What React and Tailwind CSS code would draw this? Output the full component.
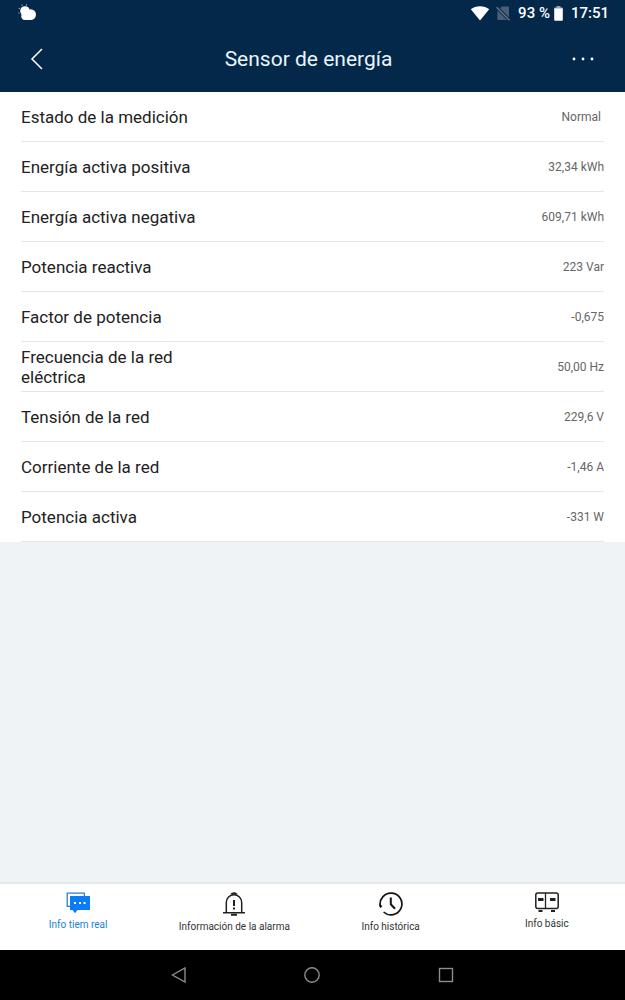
import React from 'react';

const readings = [
  { label: 'Estado de la medición', value: 'Normal', inset: true },
  { label: 'Energía activa positiva', value: '32,34 kWh' },
  { label: 'Energía activa negativa', value: '609,71 kWh' },
  { label: 'Potencia reactiva', value: '223 Var' },
  { label: 'Factor de potencia', value: '-0,675' },
  { label: 'Frecuencia de la red eléctrica', value: '50,00 Hz' },
  { label: 'Tensión de la red', value: '229,6 V' },
  { label: 'Corriente de la red', value: '-1,46 A' },
  { label: 'Potencia activa', value: '-331 W' },
];

function WeatherIcon() {
  return (
    <svg width="20" height="18" viewBox="0 0 20 18" fill="#fff" aria-hidden="true">
      <circle cx="7" cy="7" r="4.8" />
      <circle cx="12.6" cy="10.6" r="5.4" />
      <circle cx="7" cy="12.3" r="3.7" />
      <rect x="7" y="11" width="6" height="5" />
      <g fillOpacity="0.75">
        <circle cx="8.5" cy="0.9" r="0.6" />
        <circle cx="4" cy="1.2" r="0.6" />
        <circle cx="1.2" cy="4.4" r="0.6" />
        <circle cx="0.9" cy="9" r="0.6" />
      </g>
    </svg>
  );
}

function WifiIcon() {
  return (
    <svg width="20" height="15" viewBox="0 0 20 15" fill="#fff" aria-hidden="true">
      <path d="M10 14.6 0.8 3.3C3.2 1.4 6.5 0.3 10 0.3s6.8 1.1 9.2 3z" />
    </svg>
  );
}

function NoSimIcon() {
  return (
    <svg width="14" height="15" viewBox="0 0 14 15" aria-hidden="true">
      <path d="M4 2.200 5.600 0.600H12a1 1 0 0 1 1 1v10zM1.400 4.400 11 14H2.400a1 1 0 0 1-1-1z" fill="#4c5e76" />
      <path d="m0.6 1.2 12.8 13" stroke="#6b7a8d" strokeWidth="1.3" />
    </svg>
  );
}

function BatteryIcon() {
  return (
    <svg width="9" height="15" viewBox="0 0 9 15" aria-hidden="true">
      <path d="M2.5 0h4v1.5H8a.8.8 0 0 1 .8.8V3H.2v-.7A.8.8 0 0 1 1 1.500h1.500z" fill="#98a5b5" />
      <path d="M.2 2.500h8.600v11.500a.8.8 0 0 1-.8.8H1a.8.8 0 0 1-.8-.8z" fill="#fff" />
    </svg>
  );
}

function ChatIcon() {
  return (
    <svg width="24" height="22" viewBox="0 0 24 22" aria-hidden="true">
      <path d="M4 14.300H1.200V1.200H18.300V4" fill="none" stroke="#2b7fd0" strokeWidth="1.3" />
      <path d="M4 4h20v14H11.500L9 21.300 6.500 18H4z" fill="#0a7cf5" />
      <path d="M8 10h2v2H8zM13 10h2v2h-2zM17.500 10h2v2h-2z" fill="#fff" />
    </svg>
  );
}

function BellIcon() {
  return (
    <svg width="24" height="24" viewBox="0 0 24 24" fill="none" stroke="#202020" strokeWidth="1.5" aria-hidden="true">
      <path d="M4.300 20.500V10.500a7.700 7.700 0 0 1 15.400 0v10M1 20.800h22" />
      <path d="M9.500 2.400C10 .8 14 .8 14.500 2.400M9 22.800h6" strokeWidth="2" />
      <path d="M12 8v6M12 15.500v2" strokeWidth="2" />
    </svg>
  );
}

function HistoryIcon() {
  return (
    <svg width="24" height="24" viewBox="0 0 24 24" fill="none" stroke="#151515" strokeWidth="1.7" aria-hidden="true">
      <path d="M4.600 20A10.900 10.900 0 1 0 1.400 14.500" />
      <path d="M0.500 12.600 1.600 15.200 3 13.600" strokeWidth="1.2" />
      <path d="M11.800 5.500v6.800l4.200 4.400" strokeWidth="2" />
    </svg>
  );
}

function DeviceIcon() {
  return (
    <svg width="24" height="21" viewBox="0 0 24 21" fill="none" stroke="#202020" aria-hidden="true">
      <rect x="0.800" y="0.900" width="22.400" height="15.600" rx="2" strokeWidth="1.5" />
      <path d="M10.500 1v15.500" strokeWidth="1.3" />
      <path d="M3 7.500h5.500M15 7.500h5.500" strokeWidth="3" />
      <path d="M3.500 19h4M16 19h4" strokeWidth="2" />
    </svg>
  );
}

const tabs = [
  { label: 'Info tiem real', Icon: ChatIcon, active: true },
  { label: 'Información de la alarma', Icon: BellIcon },
  { label: 'Info histórica', Icon: HistoryIcon },
  { label: 'Info básic', Icon: DeviceIcon },
];

export default function App() {
  return (
    <div className="flex min-h-screen flex-col bg-[#eff3f6] font-['Roboto',sans-serif] text-[#222]">
      <header className="bg-[#042849] text-white">
        <div className="flex h-[26px] items-center justify-between pr-4 pl-[18px]">
          <WeatherIcon />
          <div className="flex items-center text-[15px] leading-5 font-medium">
            <WifiIcon />
            <span className="ml-1.5"><NoSimIcon /></span>
            <span className="ml-2">93 %</span>
            <span className="ml-1"><BatteryIcon /></span>
            <span className="ml-2">17:51</span>
          </div>
        </div>
        <div className="grid h-[66px] grid-cols-[1fr_auto_1fr] items-center pr-5 pl-3">
          <button type="button" aria-label="Atrás" className="flex h-10 w-[50px] items-center justify-center justify-self-start">
            <svg width="14" height="22" viewBox="0 0 14 22" fill="none" stroke="#fff" strokeWidth="1.5" aria-hidden="true">
              <path d="M12 1 2 11l10 10" />
            </svg>
          </button>
          <h1 className="text-[21px] leading-7 font-normal text-[#e9f5fb]">Sensor de energía</h1>
          <button type="button" aria-label="Más opciones" className="flex h-10 w-11 items-center justify-center justify-self-end">
            <svg width="24" height="4" viewBox="0 0 24 4" fill="#fff" aria-hidden="true">
              <circle cx="3" cy="2" r="1.4" />
              <circle cx="12" cy="2" r="1.4" />
              <circle cx="21" cy="2" r="1.4" />
            </svg>
          </button>
        </div>
      </header>

      <main className="flex-1">
        <dl className="bg-white px-[21px]">
          {readings.map(({ label, value, inset }) => (
            <div key={label} className="flex min-h-[50px] items-center justify-between border-b border-[#e6e6e6]">
              <dt className="max-w-44 text-[17px] leading-5">{label}</dt>
              <dd className={inset ? 'pr-[3px] text-xs leading-5 text-[#666]' : 'text-xs leading-5 text-[#666]'}>{value}</dd>
            </div>
          ))}
        </dl>
      </main>

      <nav className="grid h-[68px] grid-cols-4 border-t-2 border-[#e5e8ea] bg-white">
        {tabs.map(({ label, Icon, active }) => (
          <button
            key={label}
            type="button"
            className={
              active
                ? 'flex flex-col items-center gap-[3px] pt-2 text-[10px] leading-4 text-[#1b7fd6]'
                : 'flex flex-col items-center gap-[3px] pt-2 text-[10px] leading-4 text-[#333]'
            }
          >
            <Icon />
            <span>{label}</span>
          </button>
        ))}
      </nav>

      <div className="flex h-[50px] items-center justify-center bg-black">
        <div className="grid w-[64%] grid-cols-3 justify-items-center">
          <button type="button" aria-label="Volver">
            <svg width="16" height="16" viewBox="0 0 16 16" fill="none" stroke="#8c8c8c" strokeWidth="1.4" aria-hidden="true">
              <path d="M14 1v14L1.500 8z" />
            </svg>
          </button>
          <button type="button" aria-label="Inicio">
            <svg width="16" height="16" viewBox="0 0 16 16" fill="none" stroke="#8c8c8c" strokeWidth="1.4" aria-hidden="true">
              <circle cx="8" cy="8" r="7.200" />
            </svg>
          </button>
          <button type="button" aria-label="Recientes">
            <svg width="16" height="16" viewBox="0 0 16 16" fill="none" stroke="#8c8c8c" strokeWidth="1.4" aria-hidden="true">
              <rect x="1.500" y="1.500" width="13" height="13" />
            </svg>
          </button>
        </div>
      </div>
    </div>
  );
}
